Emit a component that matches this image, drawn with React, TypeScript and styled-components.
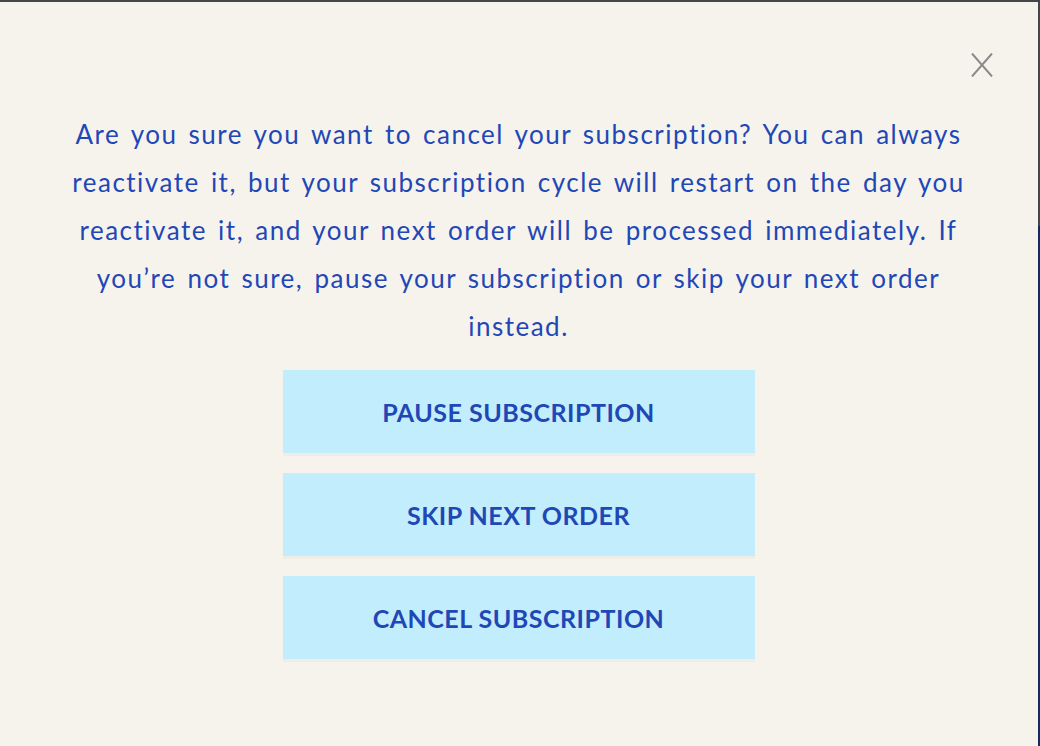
import React from 'react';
import styled, { createGlobalStyle } from 'styled-components';

const GlobalStyle = createGlobalStyle`
  html, body {
    margin: 0;
    padding: 0;
  }
  body {
    /* what shows behind the modal: dark grey header strip, navy page */
    background: linear-gradient(to bottom, #45464a 0, #45464a 226px, #14295f 226px);
    font-family: Lato, "Open Sans", sans-serif;
  }
`;

const Modal = styled.div`
  box-sizing: border-box;
  width: 1038px;
  height: 744px;
  margin-top: 2px;
  background: #f6f3ed;
  padding: 51px 45px 0 44px;
  display: flex;
  flex-direction: column;
  align-items: center;
`;

const Header = styled.div`
  align-self: stretch;
  display: flex;
  justify-content: flex-end;
  height: 24px;
`;

const CloseButton = styled.button`
  width: 22px;
  height: 24px;
  padding: 0;
  border: none;
  background: none;
  cursor: pointer;
  display: flex;

  svg {
    width: 22px;
    height: 24px;
  }
`;

const Message = styled.p`
  margin: 33px 0 0;
  width: 914px;
  text-align: center;
  color: #1f47b6;
  font-size: 26px;
  line-height: 48px;
  letter-spacing: 1.5px;
  word-spacing: 3px;
`;

const Actions = styled.div`
  margin-top: 20px;
  display: flex;
  flex-direction: column;
  gap: 20px;
`;

const ActionButton = styled.button`
  width: 472px;
  height: 83px;
  border: none;
  background: #c2edfc;
  box-shadow: 0 3px 0 #efede6;
  color: #1f47b6;
  font-family: Lato, "Open Sans", sans-serif;
  font-size: 25px;
  font-weight: 700;
  letter-spacing: 0.5px;
  text-transform: uppercase;
  cursor: pointer;
`;

const actions = ['Pause subscription', 'Skip next order', 'Cancel subscription'];

export default function App() {
  return (
    <>
      <GlobalStyle />
      <Modal>
        <Header>
          <CloseButton aria-label="Close">
            <svg viewBox="0 0 22 24" fill="none" stroke="#8a8a8a" strokeWidth="2">
              <path d="M1 0.5 L21 23.5 M21 0.5 L1 23.5" />
            </svg>
          </CloseButton>
        </Header>
        <Message>
          Are you sure you want to cancel your subscription? You can always
          reactivate it, but your subscription cycle will restart on the day you
          reactivate it, and your next order will be processed immediately. If
          you’re not sure, pause your subscription or skip your next order
          instead.
        </Message>
        <Actions>
          {actions.map((label) => (
            <ActionButton key={label}>{label}</ActionButton>
          ))}
        </Actions>
      </Modal>
    </>
  );
}
